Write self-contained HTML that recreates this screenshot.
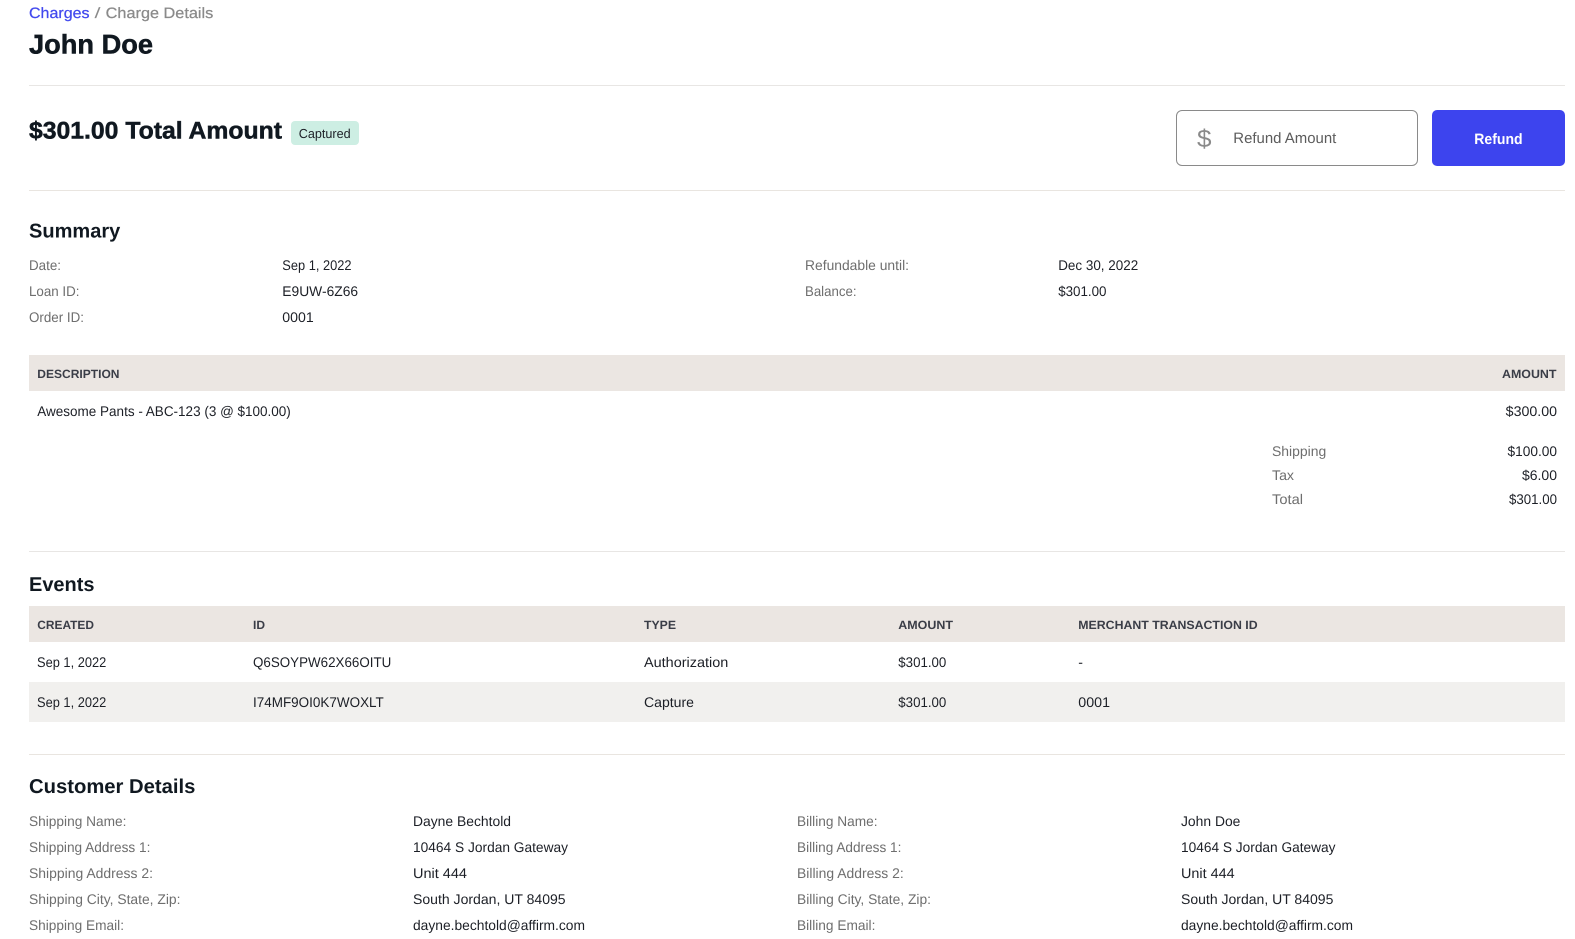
<!DOCTYPE html>
<html lang="en">
<head>
<meta charset="utf-8">
<title>Charge Details</title>
<style>
html,body{margin:0;padding:0;background:#fff;width:1575px;height:939px;overflow:hidden}
svg{display:block}
text{font-family:"Liberation Sans",sans-serif;font-size:14px;fill:#1c1f26;text-rendering:geometricPrecision}
.l{fill:#6e6e6e}
.h{font-size:12px;font-weight:700;fill:#3a3d47}
.t{font-size:20px;font-weight:700;fill:#101820}
.k{stroke:#101820;stroke-width:.5px}
.m{stroke-width:.25px}
</style>
</head>
<body>
<svg width="1575" height="939" viewBox="0 0 1575 939" xmlns="http://www.w3.org/2000/svg">
<rect width="1575" height="939" fill="#fff"/>
<!-- header -->
<text class="m" x="29" y="18" textLength="60.5" lengthAdjust="spacingAndGlyphs" style="font-size:15px;fill:#4249ee;stroke:#4249ee">Charges</text>
<text x="94.5" y="18" textLength="6" lengthAdjust="spacingAndGlyphs" style="font-size:15px;fill:#8a8a8a">/</text>
<text class="m" x="105.7" y="18" textLength="107.6" lengthAdjust="spacingAndGlyphs" style="font-size:15px;fill:#8a8a8a;stroke:#8a8a8a">Charge Details</text>
<text class="k" x="29" y="53.6" textLength="124" lengthAdjust="spacingAndGlyphs" style="font-size:27px;font-weight:700;fill:#101820">John Doe</text>
<rect x="29" y="85" width="1536" height="1" fill="#e8e6e4"/>
<!-- amount -->
<text class="k" x="29" y="138.7" textLength="253" lengthAdjust="spacingAndGlyphs" style="font-size:24px;font-weight:700;fill:#101820">$301.00 Total Amount</text>
<rect x="291" y="121" width="68" height="24" rx="4" fill="#cdeee3"/>
<text x="298.7" y="138" textLength="52" lengthAdjust="spacingAndGlyphs" style="font-size:13px">Captured</text>
<rect x="1176.5" y="110.5" width="241" height="55" rx="5.5" fill="#fff" stroke="#8a8a8a"/>
<text x="1197" y="147" textLength="14.5" lengthAdjust="spacingAndGlyphs" style="font-size:25px;fill:#8a8a8a;font-weight:400">$</text>
<text x="1233.3" y="142.8" textLength="103" lengthAdjust="spacingAndGlyphs" style="font-size:15px;fill:#5c5c5c">Refund Amount</text>
<rect x="1432" y="110" width="133" height="56" rx="5" fill="#3d44ee"/>
<text x="1474.3" y="144" textLength="48.3" lengthAdjust="spacingAndGlyphs" style="font-size:15px;font-weight:700;fill:#fff">Refund</text>
<rect x="29" y="190" width="1536" height="1" fill="#e9e5e0"/>
<!-- summary -->
<text class="t" x="29" y="237.6" textLength="91.3" lengthAdjust="spacingAndGlyphs">Summary</text>
<text class="l" x="29" y="270" textLength="32" lengthAdjust="spacingAndGlyphs">Date:</text>
<text x="282.3" y="270" textLength="69.2" lengthAdjust="spacingAndGlyphs">Sep 1, 2022</text>
<text class="l" x="29" y="296" textLength="50.5" lengthAdjust="spacingAndGlyphs">Loan ID:</text>
<text x="282.3" y="296" textLength="75.8" lengthAdjust="spacingAndGlyphs">E9UW-6Z66</text>
<text class="l" x="29" y="322" textLength="55" lengthAdjust="spacingAndGlyphs">Order ID:</text>
<text x="282.3" y="322" textLength="31.4" lengthAdjust="spacingAndGlyphs">0001</text>
<text class="l" x="805" y="270" textLength="104" lengthAdjust="spacingAndGlyphs">Refundable until:</text>
<text x="1058.2" y="270" textLength="80" lengthAdjust="spacingAndGlyphs">Dec 30, 2022</text>
<text class="l" x="805" y="296" textLength="51.5" lengthAdjust="spacingAndGlyphs">Balance:</text>
<text x="1058.2" y="296" textLength="48.3" lengthAdjust="spacingAndGlyphs">$301.00</text>
<!-- description table -->
<rect x="29" y="355" width="1536" height="36" fill="#ebe6e2"/>
<text class="h" x="37.3" y="378" textLength="82.2" lengthAdjust="spacingAndGlyphs">DESCRIPTION</text>
<text class="h" x="1502" y="378" textLength="54.5" lengthAdjust="spacingAndGlyphs">AMOUNT</text>
<text x="37.3" y="416" textLength="253.5" lengthAdjust="spacingAndGlyphs">Awesome Pants - ABC-123 (3 @ $100.00)</text>
<text x="1505.7" y="416" textLength="51.3" lengthAdjust="spacingAndGlyphs">$300.00</text>
<text class="l" x="1272" y="456" textLength="54.3" lengthAdjust="spacingAndGlyphs">Shipping</text>
<text x="1507.5" y="456" textLength="49.5" lengthAdjust="spacingAndGlyphs">$100.00</text>
<text class="l" x="1272" y="480" textLength="22" lengthAdjust="spacingAndGlyphs">Tax</text>
<text x="1522" y="480" textLength="35" lengthAdjust="spacingAndGlyphs">$6.00</text>
<text class="l" x="1272" y="504" textLength="31" lengthAdjust="spacingAndGlyphs">Total</text>
<text x="1509" y="504" textLength="48" lengthAdjust="spacingAndGlyphs">$301.00</text>
<rect x="29" y="551" width="1536" height="1" fill="#e8e6e4"/>
<!-- events -->
<text class="t" x="29" y="590.8" textLength="65.5" lengthAdjust="spacingAndGlyphs">Events</text>
<rect x="29" y="606" width="1536" height="36" fill="#ebe6e2"/>
<text class="h" x="37.3" y="629" textLength="56.7" lengthAdjust="spacingAndGlyphs">CREATED</text>
<text class="h" x="253" y="629" textLength="12" lengthAdjust="spacingAndGlyphs">ID</text>
<text class="h" x="644" y="629" textLength="32" lengthAdjust="spacingAndGlyphs">TYPE</text>
<text class="h" x="898.3" y="629" textLength="54.7" lengthAdjust="spacingAndGlyphs">AMOUNT</text>
<text class="h" x="1078.3" y="629" textLength="179.3" lengthAdjust="spacingAndGlyphs">MERCHANT TRANSACTION ID</text>
<text x="37" y="667" textLength="69.3" lengthAdjust="spacingAndGlyphs">Sep 1, 2022</text>
<text x="253" y="667" textLength="138.3" lengthAdjust="spacingAndGlyphs">Q6SOYPW62X66OITU</text>
<text x="644" y="667" textLength="84.3" lengthAdjust="spacingAndGlyphs">Authorization</text>
<text x="898.3" y="667" textLength="48" lengthAdjust="spacingAndGlyphs">$301.00</text>
<text x="1078.3" y="667" textLength="4.7" lengthAdjust="spacingAndGlyphs">-</text>
<rect x="29" y="682" width="1536" height="40" fill="#f1f0ee"/>
<text x="37" y="707" textLength="69.3" lengthAdjust="spacingAndGlyphs">Sep 1, 2022</text>
<text x="253" y="707" textLength="130.8" lengthAdjust="spacingAndGlyphs">I74MF9OI0K7WOXLT</text>
<text x="644" y="707" textLength="50" lengthAdjust="spacingAndGlyphs">Capture</text>
<text x="898.3" y="707" textLength="48" lengthAdjust="spacingAndGlyphs">$301.00</text>
<text x="1078.3" y="707" textLength="31.7" lengthAdjust="spacingAndGlyphs">0001</text>
<rect x="29" y="754" width="1536" height="1" fill="#e9e5e0"/>
<!-- customer -->
<text class="t" x="29" y="793.2" textLength="166.4" lengthAdjust="spacingAndGlyphs">Customer Details</text>
<text class="l" x="29" y="826" textLength="97.5" lengthAdjust="spacingAndGlyphs">Shipping Name:</text>
<text x="413" y="826" textLength="98" lengthAdjust="spacingAndGlyphs">Dayne Bechtold</text>
<text class="l" x="797" y="826" textLength="80.5" lengthAdjust="spacingAndGlyphs">Billing Name:</text>
<text x="1181" y="826" textLength="59.4" lengthAdjust="spacingAndGlyphs">John Doe</text>
<text class="l" x="29" y="852" textLength="121.4" lengthAdjust="spacingAndGlyphs">Shipping Address 1:</text>
<text x="413" y="852" textLength="155" lengthAdjust="spacingAndGlyphs">10464 S Jordan Gateway</text>
<text class="l" x="797" y="852" textLength="104.4" lengthAdjust="spacingAndGlyphs">Billing Address 1:</text>
<text x="1181" y="852" textLength="154.5" lengthAdjust="spacingAndGlyphs">10464 S Jordan Gateway</text>
<text class="l" x="29" y="878" textLength="124" lengthAdjust="spacingAndGlyphs">Shipping Address 2:</text>
<text x="413" y="878" textLength="54" lengthAdjust="spacingAndGlyphs">Unit 444</text>
<text class="l" x="797" y="878" textLength="106.7" lengthAdjust="spacingAndGlyphs">Billing Address 2:</text>
<text x="1181" y="878" textLength="53.6" lengthAdjust="spacingAndGlyphs">Unit 444</text>
<text class="l" x="29" y="904" textLength="151.5" lengthAdjust="spacingAndGlyphs">Shipping City, State, Zip:</text>
<text x="413" y="904" textLength="152.6" lengthAdjust="spacingAndGlyphs">South Jordan, UT 84095</text>
<text class="l" x="797" y="904" textLength="134" lengthAdjust="spacingAndGlyphs">Billing City, State, Zip:</text>
<text x="1181" y="904" textLength="152.4" lengthAdjust="spacingAndGlyphs">South Jordan, UT 84095</text>
<text class="l" x="29" y="930" textLength="95" lengthAdjust="spacingAndGlyphs">Shipping Email:</text>
<text x="413" y="930" textLength="172" lengthAdjust="spacingAndGlyphs">dayne.bechtold@affirm.com</text>
<text class="l" x="797" y="930" textLength="78.4" lengthAdjust="spacingAndGlyphs">Billing Email:</text>
<text x="1181" y="930" textLength="172" lengthAdjust="spacingAndGlyphs">dayne.bechtold@affirm.com</text>
</svg>
</body>
</html>
